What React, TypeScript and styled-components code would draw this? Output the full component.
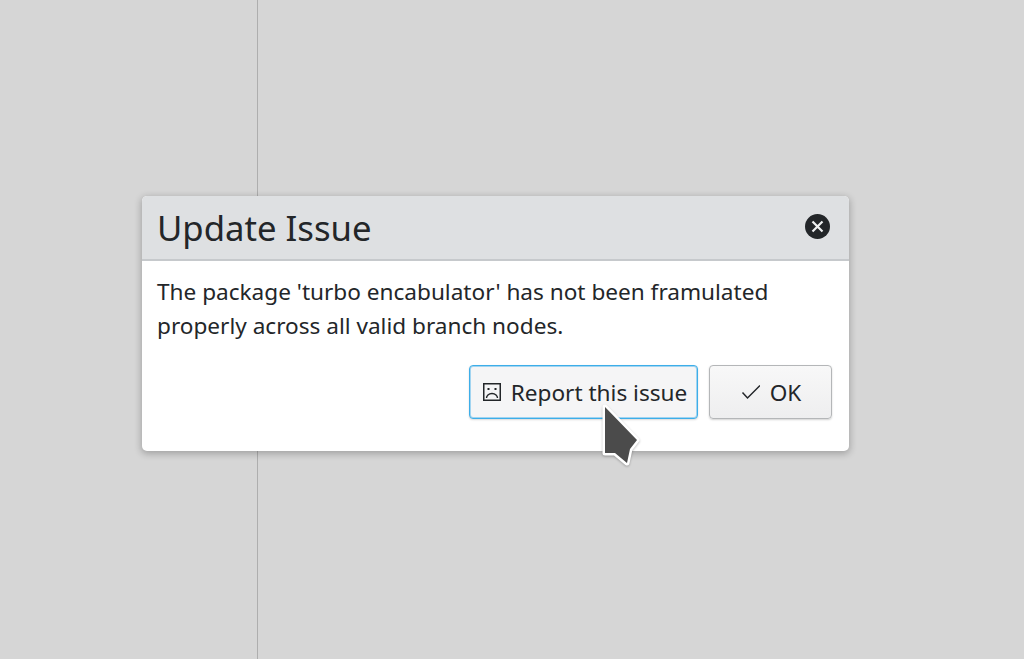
import React from 'react';
import styled, { createGlobalStyle } from 'styled-components';

const GlobalStyle = createGlobalStyle`
  html, body {
    margin: 0;
    padding: 0;
    background: #d6d6d6;
  }
  * {
    box-sizing: border-box;
  }
`;

const Page = styled.div`
  position: relative;
  display: flex;
  width: 1024px;
  height: 659px;
  overflow: hidden;
  background: #d6d6d6;
  font-family: 'Noto Sans', sans-serif;
  color: #232629;
`;

const SidePanel = styled.div`
  width: 258px;
  height: 100%;
  border-right: 1px solid #aeaeae;
`;

const Dialog = styled.div`
  position: absolute;
  left: 142px;
  top: 196px;
  width: 707px;
  height: 255px;
  display: flex;
  flex-direction: column;
  background: #fff;
  border-radius: 5px;
  box-shadow: 0 2px 7px 1px rgba(0, 0, 0, 0.24);
  overflow: hidden;
`;

const Header = styled.div`
  display: flex;
  align-items: center;
  justify-content: space-between;
  height: 65px;
  padding: 0 19px 2px 15px;
  background: #dee0e2;
  border-bottom: 2px solid #c6c9cc;
`;

const Title = styled.h1`
  margin: 3px 0 0;
  font-size: 34.7px;
  font-weight: 400;
  line-height: 60px;
`;

const CloseButton = styled.button`
  display: flex;
  width: 25px;
  height: 25px;
  padding: 0;
  border: 0;
  background: transparent;
`;

const Body = styled.div`
  flex: 1;
  display: flex;
  flex-direction: column;
  padding: 14px 17px 32px 15px;
`;

const Message = styled.p`
  margin: 0;
  width: 660px;
  font-size: 22.6px;
  line-height: 34px;
`;

const Actions = styled.div`
  display: flex;
  justify-content: flex-end;
  gap: 11px;
  margin-top: auto;
`;

const Button = styled.button<{ $focused?: boolean }>`
  display: flex;
  align-items: center;
  justify-content: center;
  gap: 10px;
  height: 54px;
  padding: ${(p) => (p.$focused ? '0 0 0 3px' : '0')};
  width: ${(p) => (p.$focused ? '229px' : '123px')};
  border-radius: 4px;
  border: 1px solid ${(p) => (p.$focused ? '#3daee9' : '#b4b6b8')};
  background: ${(p) =>
    p.$focused ? '#f5f5f6' : 'linear-gradient(#f8f8f8, #eeeeef)'};
  box-shadow: ${(p) =>
    p.$focused
      ? 'inset 0 0 0 1px rgba(61, 174, 233, 0.45), 0 1px 2px rgba(0, 0, 0, 0.15)'
      : '0 1px 2px rgba(0, 0, 0, 0.18)'};
  font-family: inherit;
  font-size: 22.6px;
  color: #232629;
`;

const Cursor = styled.svg`
  position: absolute;
  left: 590px;
  top: 400px;
  filter: drop-shadow(0 1px 1px rgba(0, 0, 0, 0.25));
`;

const CloseIcon = () => (
  <svg width="25" height="25" viewBox="0 0 25 25">
    <circle cx="12.5" cy="12.5" r="12.5" fill="#232629" />
    <path d="M7.5 7.5l10 10M17.5 7.5l-10 10" stroke="#eff0f1" strokeWidth="2.2" fill="none" />
  </svg>
);

const SadFaceIcon = () => (
  <svg width="18" height="18" viewBox="0 0 18 18" fill="none" stroke="#232629">
    <rect x="0.75" y="0.75" width="16.5" height="16.5" strokeWidth="1.5" />
    <path d="M4.5 6h2M11.5 6h2" strokeWidth="2" />
    <path d="M3.5 15c0-2 2-4.5 5.5-4.5s5.5 2.5 5.5 4.5" strokeWidth="1.4" />
  </svg>
);

const CheckIcon = () => (
  <svg width="20" height="16" viewBox="0 0 20 16" fill="none">
    <path d="M2.5 8.5l5 5.5L20 1.5" stroke="#232629" strokeWidth="1.5" />
  </svg>
);

const App = () => (
  <Page>
    <GlobalStyle />
    <SidePanel />
    <Dialog>
      <Header>
        <Title>Update Issue</Title>
        <CloseButton type="button" aria-label="Close">
          <CloseIcon />
        </CloseButton>
      </Header>
      <Body>
        <Message>
          The package 'turbo encabulator' has not been framulated properly
          across all valid branch nodes.
        </Message>
        <Actions>
          <Button type="button" $focused>
            <SadFaceIcon />
            Report this issue
          </Button>
          <Button type="button">
            <CheckIcon />
            OK
          </Button>
        </Actions>
      </Body>
    </Dialog>
    <Cursor width="60" height="70" viewBox="0 0 60 70">
      <path
        d="M15 7L47 40L40 49L37 63L25 53L15 53Z"
        fill="#4b4b4b"
        stroke="#fff"
        strokeWidth="5"
        strokeLinejoin="round"
        paintOrder="stroke"
      />
    </Cursor>
  </Page>
);

export default App;
